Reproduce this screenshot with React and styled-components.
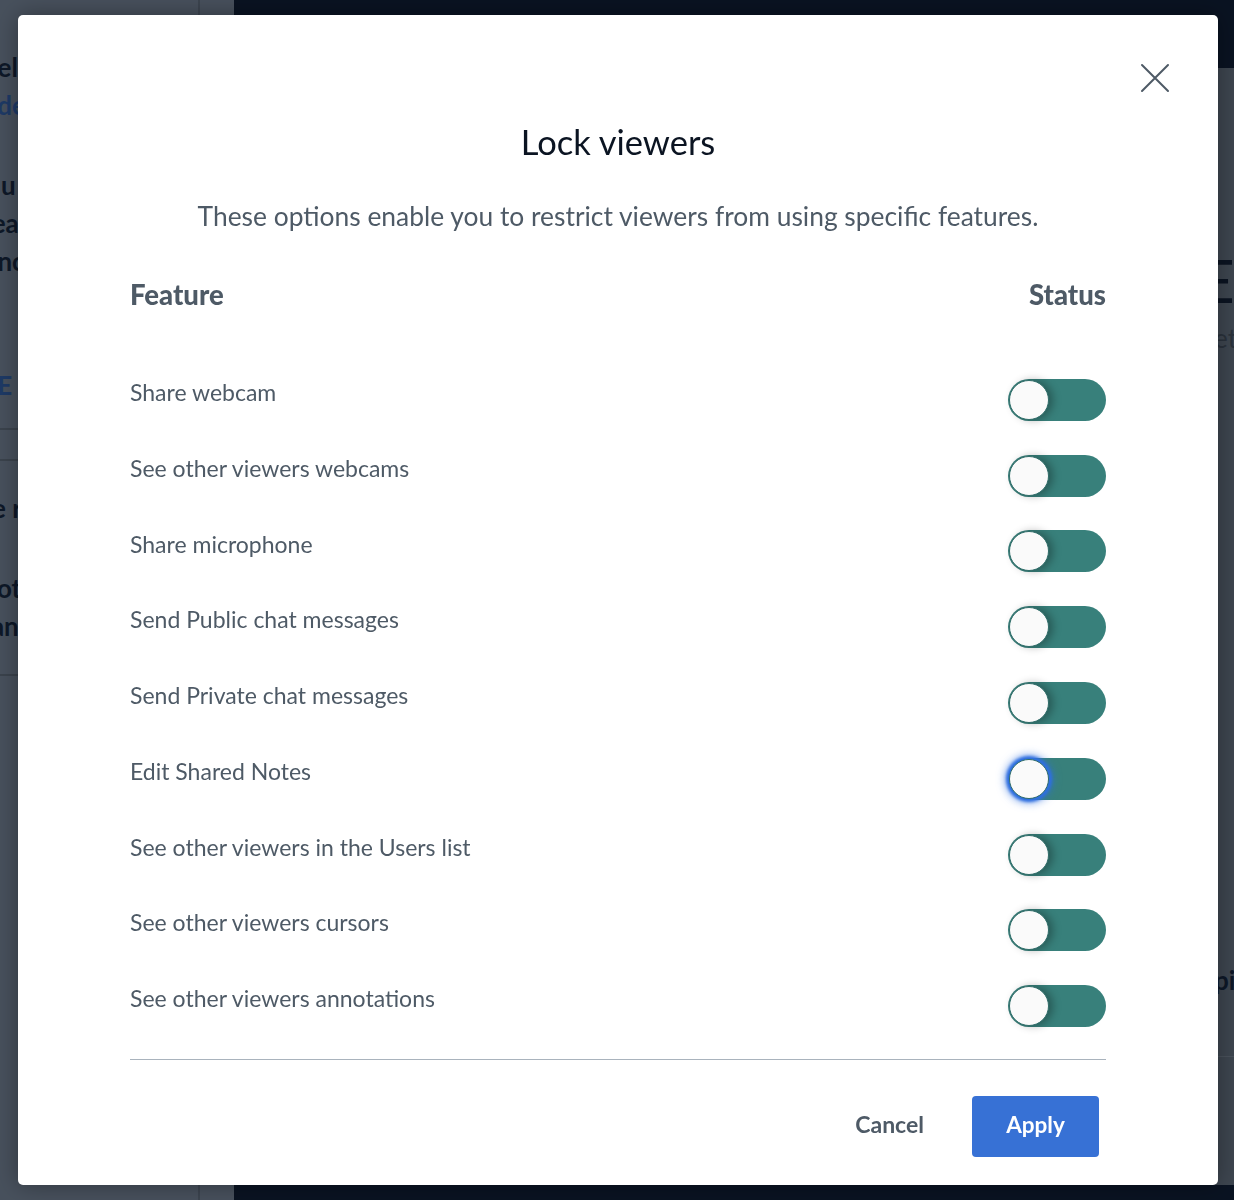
import React from 'react';
import styled, { createGlobalStyle } from 'styled-components';

const GlobalStyle = createGlobalStyle`
  html, body {
    margin: 0;
    padding: 0;
    width: 1234px;
    height: 1200px;
    overflow: hidden;
    background: #0b1422;
    font-family: Lato, 'Liberation Sans', sans-serif;
  }
`;

const Screen = styled.div`
  display: grid;
  grid-template-columns: 198px 2px 34px 1fr;
  width: 1234px;
  height: 1200px;
  overflow: hidden;
`;

const Sidebar = styled.div`
  background: #48515d;
  display: flex;
  flex-direction: column;
  overflow: hidden;
  padding-top: 48px;
`;

const SidebarRule = styled.div`
  background: #3d4550;
`;

const SidebarText = styled.div`
  font-size: 26px;
  font-weight: 700;
  line-height: 38px;
  white-space: nowrap;
  color: ${(p) => (p.$blue ? '#1e3a66' : '#0e1828')};
  margin-left: ${(p) => p.$indent || 0}px;
  margin-top: ${(p) => p.$gap || 0}px;
`;

const SidebarLine = styled.div`
  height: 2px;
  background: #3b434d;
  margin-top: ${(p) => p.$gap || 0}px;
`;

const Main = styled.div`
  display: flex;
  flex-direction: column;
  background: #0b1422;
`;

const TopBar = styled.div`
  height: 68px;
  background: #0a1322;
`;

const SidePanel = styled.div`
  flex: 1;
  background: #3e4650;
  display: flex;
  flex-direction: column;
  padding-left: 966px;
  overflow: hidden;
`;

const PanelHeading = styled.div`
  font-size: 60px;
  line-height: 60px;
  color: #0b1422;
  margin-top: ${(p) => p.$gap || 0}px;
  white-space: nowrap;
`;

const PanelText = styled.div`
  font-size: 26px;
  line-height: 32px;
  color: ${(p) => (p.$dark ? '#0e1828' : '#2a323c')};
  font-weight: ${(p) => (p.$dark ? 700 : 400)};
  margin-top: ${(p) => p.$gap || 0}px;
  white-space: nowrap;
`;

const PanelDot = styled.div`
  width: 40px;
  height: 40px;
  border-radius: 50%;
  background: #0d1e3e;
  margin-top: ${(p) => p.$gap || 0}px;
  align-self: flex-start;
  transform: translateX(-22px);
`;

const PanelLine = styled.div`
  height: 1px;
  background: #4a525c;
  margin-top: ${(p) => p.$gap || 0}px;
`;

const BottomBar = styled.div`
  height: 15px;
  background: #0a1322;
`;

const Modal = styled.div`
  position: fixed;
  top: 15px;
  left: 18px;
  width: 1200px;
  height: 1170px;
  box-sizing: border-box;
  background: #fff;
  border-radius: 5px;
  box-shadow: 0 0 24px rgba(0, 0, 0, 0.35);
  padding: 107px 112px 28px;
  display: flex;
  flex-direction: column;
`;

const CloseButton = styled.button`
  position: absolute;
  top: 47px;
  right: 47px;
  width: 32px;
  height: 32px;
  padding: 0;
  border: 0;
  background: none;
  display: flex;
  align-items: center;
  justify-content: center;
  cursor: pointer;
`;

const Title = styled.h2`
  margin: 0;
  text-align: center;
  font-size: 34.5px;
  line-height: 40px;
  font-weight: 400;
  color: #0b1422;
`;

const Subtitle = styled.p`
  margin: 38px 0 0;
  text-align: center;
  font-size: 26.4px;
  line-height: 32px;
  color: #4e5a66;
`;

const TableHead = styled.div`
  display: flex;
  justify-content: space-between;
  margin-top: 47px;
  margin-bottom: 51px;
  font-size: 27.5px;
  line-height: 32px;
  font-weight: 900;
  color: #4e5a66;
`;

const Row = styled.div`
  display: flex;
  justify-content: space-between;
  align-items: center;
  height: 75.9px;
`;

const Label = styled.span`
  align-self: flex-start;
  margin-top: 15px;
  font-size: 23px;
  line-height: 30px;
  color: #4e5a66;
`;

const Toggle = styled.button`
  position: relative;
  width: 98px;
  height: 42px;
  padding: 0;
  border: 0;
  border-radius: 21px;
  background: #38807b;
  cursor: pointer;
`;

const Knob = styled.span`
  position: absolute;
  top: 1px;
  left: 1px;
  width: 40px;
  height: 40px;
  box-sizing: border-box;
  border-radius: 50%;
  background: #fafafa;
  border: 1px solid #2f6c68;
  box-shadow: ${(p) =>
    p.$focused
      ? '0 0 3px 3px #2f6fe0, 0 0 8px 4px rgba(47, 111, 224, 0.6)'
      : '4px 0 8px rgba(0, 0, 0, 0.3)'};
`;

const Divider = styled.hr`
  margin: 15px 0 0;
  border: 0;
  height: 1px;
  background: #a9b3bd;
`;

const Footer = styled.div`
  display: flex;
  justify-content: flex-end;
  align-items: center;
  gap: 48px;
  margin-top: 36px;
  padding-right: 7px;
`;

const CancelButton = styled.button`
  border: 0;
  background: none;
  padding: 0 0 6px;
  font-family: inherit;
  font-size: 23px;
  font-weight: 700;
  color: #4e5a66;
  cursor: pointer;
`;

const ApplyButton = styled.button`
  width: 127px;
  height: 61px;
  border: 0;
  border-radius: 4px;
  padding: 0 0 5px;
  background: #3771d5;
  color: #fff;
  font-family: inherit;
  font-size: 22.5px;
  font-weight: 700;
  cursor: pointer;
`;

const features = [
  'Share webcam',
  'See other viewers webcams',
  'Share microphone',
  'Send Public chat messages',
  'Send Private chat messages',
  'Edit Shared Notes',
  'See other viewers in the Users list',
  'See other viewers cursors',
  'See other viewers annotations',
];

const CloseIcon = () => (
  <svg width="30" height="30" viewBox="0 0 30 30" fill="none">
    <path d="M2 2 L28 28 M28 2 L2 28" stroke="#4e5a66" strokeWidth="2" strokeLinecap="round" />
  </svg>
);

export default function App() {
  return (
    <>
      <GlobalStyle />
      <Screen>
        <Sidebar>
          <SidebarText $indent={-46}>Panel</SidebarText>
          <SidebarText $indent={-30} $blue>Slide</SidebarText>
          <SidebarText $indent={-46} $gap={42}>Exclu</SidebarText>
          <SidebarText $indent={-32}>Clea</SidebarText>
          <SidebarText $indent={-40}>Manc</SidebarText>
          <SidebarText $indent={-44} $gap={86} $blue>LogE</SidebarText>
          <SidebarLine $gap={24} />
          <SidebarLine $gap={29} />
          <SidebarText $indent={-8} $gap={28}>e r</SidebarText>
          <SidebarText $indent={-20} $gap={42}>Bott</SidebarText>
          <SidebarText $indent={-26}>Ban</SidebarText>
          <SidebarLine $gap={29} />
        </Sidebar>
        <SidebarRule />
        <Sidebar />
        <Main>
          <TopBar />
          <SidePanel>
            <PanelHeading $gap={182}>ES</PanelHeading>
            <PanelText $gap={12}>Settings</PanelText>
            <PanelDot $gap={206} />
            <PanelDot $gap={124} />
            <PanelText $gap={200} $dark>Spig</PanelText>
            <PanelLine $gap={60} />
          </SidePanel>
          <BottomBar />
        </Main>
      </Screen>
      <Modal role="dialog">
        <CloseButton aria-label="Close">
          <CloseIcon />
        </CloseButton>
        <Title>Lock viewers</Title>
        <Subtitle>These options enable you to restrict viewers from using specific features.</Subtitle>
        <TableHead>
          <span>Feature</span>
          <span>Status</span>
        </TableHead>
        {features.map((name) => (
          <Row key={name}>
            <Label>{name}</Label>
            <Toggle aria-label={name}>
              <Knob $focused={name === 'Edit Shared Notes'} />
            </Toggle>
          </Row>
        ))}
        <Divider />
        <Footer>
          <CancelButton>Cancel</CancelButton>
          <ApplyButton>Apply</ApplyButton>
        </Footer>
      </Modal>
    </>
  );
}
